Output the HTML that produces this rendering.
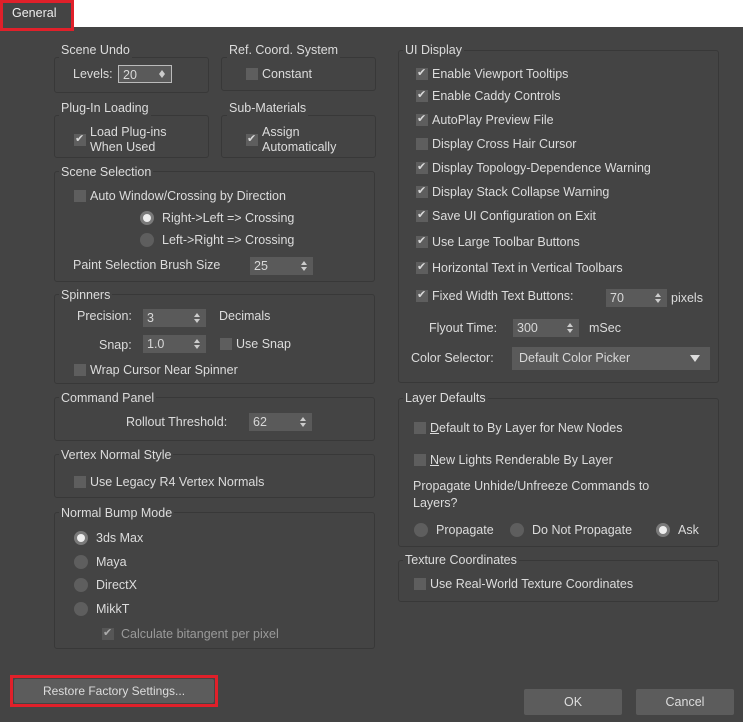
<!DOCTYPE html>
<html><head><meta charset="utf-8">
<style>
*{margin:0;padding:0;box-sizing:border-box}
body{width:743px;height:722px;background:#444;position:relative;overflow:hidden;font-family:"Liberation Sans",Arial,sans-serif;font-size:12.5px;color:#dcdcdc}
.top{position:absolute;left:0;top:0;width:743px;height:27px;background:#fff}
.tab{position:absolute;left:0;top:0;width:74px;height:31px;border:3px solid #e0202a;background:#444;color:#eee;padding:3px 0 0 9px;font-size:12.5px}
.box{position:absolute;border:1px solid #383838;border-radius:3px}
.t{position:absolute;white-space:nowrap;line-height:16px}
.lg{background:#444;padding:0 2px}
.cb{position:absolute;width:12px;height:12px;background:#5e5e5e}
.cb.c::after{content:"\2714";position:absolute;left:1px;top:-2px;font-size:11px;color:#d8d8d8;font-family:"DejaVu Sans",sans-serif}
.rd{position:absolute;width:14px;height:14px;border-radius:50%;background:#5e5e5e}
.rd.s{background:#7a7a7a}
.rd.s::after{content:"";position:absolute;left:3px;top:3px;width:8px;height:8px;border-radius:50%;background:#eee}
.sp{position:absolute;background:#5a5a5a;color:#d8d8d8;padding-left:4px;line-height:18px}
.sp::after{content:"";position:absolute;right:6px;top:4px;width:0;height:0;border-left:3px solid transparent;border-right:3px solid transparent;border-bottom:4px solid #ccc}
.sp::before{content:"";position:absolute;right:6px;bottom:4px;width:0;height:0;border-left:3px solid transparent;border-right:3px solid transparent;border-top:4px solid #ccc}
.btn{position:absolute;background:#5c5c5c;color:#ddd;text-align:center;border-radius:2px}
.dis{color:#9a9a9a}
</style></head><body>
<div class="top"></div>
<div class="tab">General</div>

<!-- left column boxes -->
<div class="box" style="left:54px;top:57px;width:155px;height:36px"></div>
<div class="t lg" style="left:59px;top:42px">Scene Undo</div>
<div class="t" style="left:73px;top:66px">Levels:</div>
<div class="sp" style="left:118px;top:65px;width:54px;height:18px;border:1px solid #bbb">20</div>

<div class="box" style="left:221px;top:57px;width:155px;height:34px"></div>
<div class="t lg" style="left:227px;top:42px">Ref. Coord. System</div>
<div class="cb" style="left:246px;top:68px"></div>
<div class="t" style="left:262px;top:66px">Constant</div>

<div class="box" style="left:54px;top:115px;width:155px;height:43px"></div>
<div class="t lg" style="left:59px;top:100px">Plug-In Loading</div>
<div class="cb c" style="left:74px;top:134px"></div>
<div class="t" style="left:90px;top:124px">Load Plug-ins</div>
<div class="t" style="left:90px;top:139px">When Used</div>

<div class="box" style="left:221px;top:115px;width:155px;height:43px"></div>
<div class="t lg" style="left:227px;top:100px">Sub-Materials</div>
<div class="cb c" style="left:246px;top:134px"></div>
<div class="t" style="left:262px;top:124px">Assign</div>
<div class="t" style="left:262px;top:139px">Automatically</div>

<div class="box" style="left:54px;top:171px;width:321px;height:111px"></div>
<div class="t lg" style="left:59px;top:164px">Scene Selection</div>
<div class="cb" style="left:74px;top:190px"></div>
<div class="t" style="left:90px;top:188px">Auto Window/Crossing by Direction</div>
<div class="rd s" style="left:140px;top:211px"></div>
<div class="t" style="left:162px;top:210px">Right-&gt;Left =&gt; Crossing</div>
<div class="rd" style="left:140px;top:233px"></div>
<div class="t" style="left:162px;top:232px">Left-&gt;Right =&gt; Crossing</div>
<div class="t" style="left:73px;top:257px">Paint Selection Brush Size</div>
<div class="sp" style="left:250px;top:257px;width:63px;height:18px">25</div>

<div class="box" style="left:54px;top:294px;width:321px;height:90px"></div>
<div class="t lg" style="left:59px;top:287px">Spinners</div>
<div class="t" style="left:77px;top:308px">Precision:</div>
<div class="sp" style="left:143px;top:309px;width:63px;height:18px">3</div>
<div class="t" style="left:219px;top:308px">Decimals</div>
<div class="t" style="left:99px;top:337px">Snap:</div>
<div class="sp" style="left:143px;top:335px;width:63px;height:18px">1.0</div>
<div class="cb" style="left:220px;top:338px"></div>
<div class="t" style="left:236px;top:336px">Use Snap</div>
<div class="cb" style="left:74px;top:364px"></div>
<div class="t" style="left:90px;top:362px">Wrap Cursor Near Spinner</div>

<div class="box" style="left:54px;top:397px;width:321px;height:44px"></div>
<div class="t lg" style="left:59px;top:390px">Command Panel</div>
<div class="t" style="left:126px;top:414px">Rollout Threshold:</div>
<div class="sp" style="left:249px;top:413px;width:63px;height:18px">62</div>

<div class="box" style="left:54px;top:454px;width:321px;height:44px"></div>
<div class="t lg" style="left:59px;top:447px">Vertex Normal Style</div>
<div class="cb" style="left:74px;top:476px"></div>
<div class="t" style="left:90px;top:474px">Use Legacy R4 Vertex Normals</div>

<div class="box" style="left:54px;top:512px;width:321px;height:137px"></div>
<div class="t lg" style="left:59px;top:505px">Normal Bump Mode</div>
<div class="rd s" style="left:74px;top:531px"></div>
<div class="t" style="left:96px;top:530px">3ds Max</div>
<div class="rd" style="left:74px;top:555px"></div>
<div class="t" style="left:96px;top:554px">Maya</div>
<div class="rd" style="left:74px;top:578px"></div>
<div class="t" style="left:96px;top:577px">DirectX</div>
<div class="rd" style="left:74px;top:602px"></div>
<div class="t" style="left:96px;top:601px">MikkT</div>
<div class="cb c" style="left:102px;top:628px;opacity:.7"></div>
<div class="t dis" style="left:121px;top:626px">Calculate bitangent per pixel</div>

<!-- right column -->
<div class="box" style="left:398px;top:50px;width:321px;height:333px"></div>
<div class="t lg" style="left:403px;top:42px">UI Display</div>
<div class="cb c" style="left:416px;top:68px"></div><div class="t" style="left:432px;top:66px">Enable Viewport Tooltips</div>
<div class="cb c" style="left:416px;top:90px"></div><div class="t" style="left:432px;top:88px">Enable Caddy Controls</div>
<div class="cb c" style="left:416px;top:114px"></div><div class="t" style="left:432px;top:112px">AutoPlay Preview File</div>
<div class="cb" style="left:416px;top:138px"></div><div class="t" style="left:432px;top:136px">Display Cross Hair Cursor</div>
<div class="cb c" style="left:416px;top:162px"></div><div class="t" style="left:432px;top:160px">Display Topology-Dependence Warning</div>
<div class="cb c" style="left:416px;top:186px"></div><div class="t" style="left:432px;top:184px">Display Stack Collapse Warning</div>
<div class="cb c" style="left:416px;top:210px"></div><div class="t" style="left:432px;top:208px">Save UI Configuration on Exit</div>
<div class="cb c" style="left:416px;top:236px"></div><div class="t" style="left:432px;top:234px">Use Large Toolbar Buttons</div>
<div class="cb c" style="left:416px;top:262px"></div><div class="t" style="left:432px;top:260px">Horizontal Text in Vertical Toolbars</div>
<div class="cb c" style="left:416px;top:290px"></div><div class="t" style="left:432px;top:288px">Fixed Width Text Buttons:</div>
<div class="sp" style="left:606px;top:289px;width:61px;height:18px">70</div>
<div class="t" style="left:671px;top:290px">pixels</div>
<div class="t" style="left:429px;top:320px">Flyout Time:</div>
<div class="sp" style="left:513px;top:319px;width:66px;height:18px">300</div>
<div class="t" style="left:589px;top:320px">mSec</div>
<div class="t" style="left:411px;top:350px">Color Selector:</div>
<div class="sp" style="left:512px;top:347px;width:198px;height:23px;padding-left:7px;line-height:22px">Default Color Picker</div>
<div style="position:absolute;left:690px;top:355px;border-left:5px solid transparent;border-right:5px solid transparent;border-top:7px solid #ddd"></div>
<style>.sp[style*="width:198px"]::after,.sp[style*="width:198px"]::before{display:none}</style>

<div class="box" style="left:398px;top:398px;width:321px;height:149px"></div>
<div class="t lg" style="left:403px;top:390px">Layer Defaults</div>
<div class="cb" style="left:414px;top:422px"></div><div class="t" style="left:430px;top:420px"><u>D</u>efault to By Layer for New Nodes</div>
<div class="cb" style="left:414px;top:454px"></div><div class="t" style="left:430px;top:452px"><u>N</u>ew Lights Renderable By Layer</div>
<div class="t" style="left:413px;top:478px">Propagate Unhide/Unfreeze Commands to</div>
<div class="t" style="left:413px;top:495px">Layers?</div>
<div class="rd" style="left:414px;top:523px"></div><div class="t" style="left:436px;top:522px">Propagate</div>
<div class="rd" style="left:510px;top:523px"></div><div class="t" style="left:532px;top:522px">Do Not Propagate</div>
<div class="rd s" style="left:656px;top:523px"></div><div class="t" style="left:678px;top:522px">Ask</div>

<div class="box" style="left:398px;top:560px;width:321px;height:42px"></div>
<div class="t lg" style="left:403px;top:552px">Texture Coordinates</div>
<div class="cb" style="left:414px;top:578px"></div><div class="t" style="left:430px;top:576px">Use Real-World Texture Coordinates</div>

<!-- bottom buttons -->
<div style="position:absolute;left:10px;top:675px;width:208px;height:32px;border:3px solid #e0202a"></div>
<div class="btn" style="left:14px;top:679px;width:200px;height:24px;line-height:24px;font-size:12px">Restore Factory Settings...</div>
<div class="btn" style="left:524px;top:689px;width:98px;height:26px;line-height:26px">OK</div>
<div class="btn" style="left:636px;top:689px;width:98px;height:26px;line-height:26px">Cancel</div>
</body></html>
